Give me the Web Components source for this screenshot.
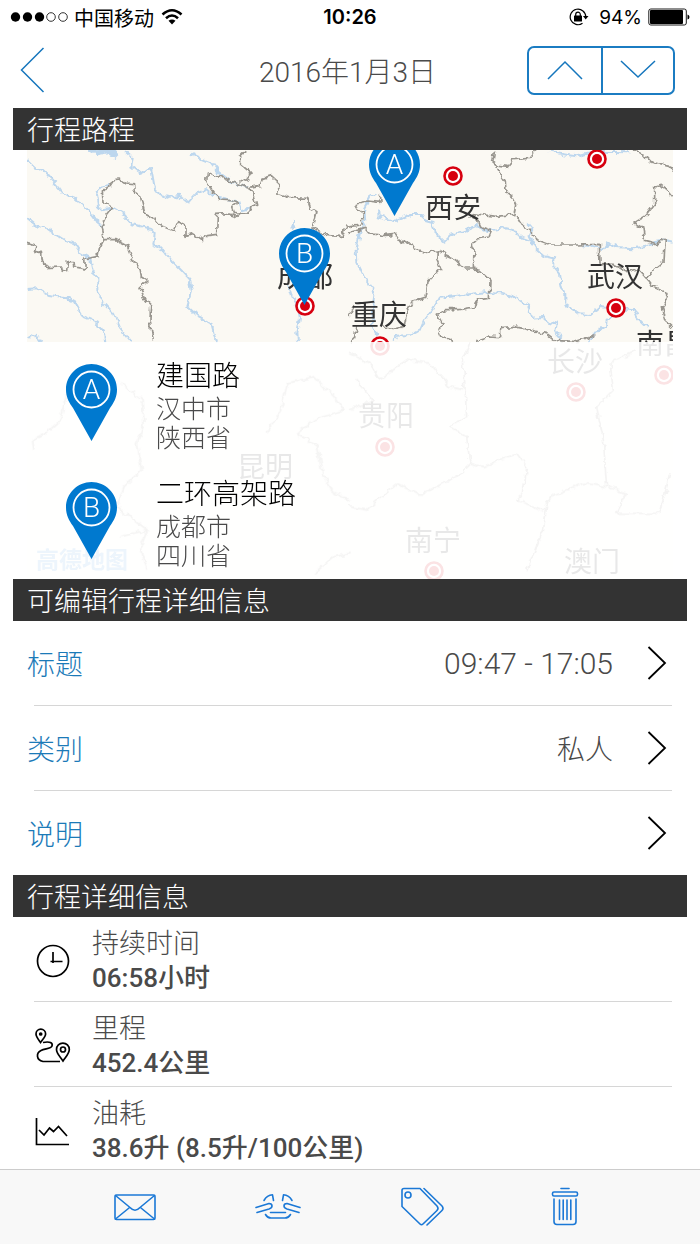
<!DOCTYPE html>
<html lang="zh-CN">
<head>
<meta charset="utf-8">
<meta name="viewport" content="width=device-width, initial-scale=1">
<title>2016年1月3日</title>
<style>
  body {
    margin: 0;
    background-color: #ffffff;
    font-family: Roboto, "Noto Sans CJK SC", sans-serif;
    font-weight: 300;
    color: #4a4a4a;
  }
</style>
</head>
<body>
<trip-page>
  <status-bar slot="status" carrier="中国移动" time="10:26" battery="94%"></status-bar>
  <nav-bar slot="nav">2016年1月3日</nav-bar>

  <trip-section heading="行程路程">
    <route-map>
      <route-stop letter="A" name="建国路" city="汉中市" province="陕西省"></route-stop>
      <route-stop letter="B" name="二环高架路" city="成都市" province="四川省"></route-stop>
    </route-map>
  </trip-section>

  <trip-section heading="可编辑行程详细信息">
    <edit-row label="标题" numeric>09:47 - 17:05</edit-row>
    <edit-row label="类别">私人</edit-row>
    <edit-row label="说明"></edit-row>
  </trip-section>

  <trip-section heading="行程详细信息">
    <detail-row icon="clock" label="持续时间">06:58小时</detail-row>
    <detail-row icon="route" label="里程">452.4公里</detail-row>
    <detail-row icon="chart" label="油耗">38.6升 (8.5升/100公里)</detail-row>
  </trip-section>

  <tool-bar slot="tools"></tool-bar>
</trip-page>

<script>
const pinShape = `
  <path fill="#0079cf" d="M25.5 0C11.5 0 0 11.300 0 25.500C0 33 3 38.500 7 44L25.500 77L44 44C48 38.500 51 33 51 25.500C51 11.300 39.500 0 25.500 0Z"/>
  <circle cx="25.500" cy="25.500" r="18" fill="none" stroke="#ffffff" stroke-width="1.800"/>
`;

const detailIcons = {
  clock: `
    <circle cx="18" cy="18" r="15.500"/>
    <path d="M18 9v11M15.500 18.500h12"/>`,
  route: `
    <path d="M5.500 14.500C3 11 1 8.500 1 6a4.800 4.800 0 0 1 9.600 0C10.600 8.500 8 11 5.500 14.500Z"/>
    <circle cx="5.700" cy="6" r="1" fill="#000000"/>
    <path d="M28 33C25 28.500 21.500 25.500 21.500 21.500a6.400 6.400 0 0 1 12.800 0C34.300 25.500 31 28.500 28 33Z"/>
    <circle cx="28" cy="21.500" r="2.500"/>
    <path d="M8 14.500C15 13 18 15 17 18C16 21 10 20.500 6 22.500C1 25 1 32 8 33.500H25"/>`,
  chart: `
    <path d="M1.500 5v26.500H34M4 17l5 5l5.500-7l4 3.500l5-5l8.500 9.500"/>`
};

class TripPage extends HTMLElement {
  constructor() {
    super();
    this.root = this.attachShadow({ mode: 'open' });
    this.root.innerHTML = `
      <style>
        :host {
          display: flex;
          flex-direction: column;
          min-height: 100vh;
        }

        main {
          flex: 1;
          padding: 0 13px;
        }
      </style>
      <slot name="status"></slot>
      <slot name="nav"></slot>
      <main><slot></slot></main>
      <slot name="tools"></slot>
    `;
  }
}

class StatusBar extends HTMLElement {
  constructor() {
    super();
    this.root = this.attachShadow({ mode: 'open' });
  }

  connectedCallback() {
    this.root.innerHTML = `
      <style>
        :host {
          display: grid;
          grid-template-columns: 1fr auto 1fr;
          align-items: center;
          height: 34px;
          padding: 0 10px;
          color: #000000;
          font-family: Inter, "Noto Sans CJK SC", sans-serif;
          font-size: 20px;
          font-weight: 400;
        }

        .side {
          display: flex;
          align-items: center;
          gap: 6px;
        }

        .right {
          justify-content: flex-end;
        }

        .time {
          font-weight: 600;
        }

        .battery {
          margin-left: 4px;
          font-size: 19px;
        }
      </style>
      <div class="side">
        <svg width="58" height="12" viewBox="0 0 58 12" aria-hidden="true">
          <circle cx="5.500" cy="6" r="4.700"/>
          <circle cx="17.500" cy="6" r="4.700"/>
          <circle cx="29.500" cy="6" r="4.700"/>
          <g fill="none" stroke="#000000" stroke-width=".8">
            <circle cx="41" cy="6" r="4.300"/>
            <circle cx="53" cy="6" r="4.300"/>
          </g>
        </svg>
        <span>${this.getAttribute('carrier')}</span>
        <svg width="24" height="18" viewBox="0 0 24 18" aria-hidden="true">
          <g fill="none" stroke="#000000" stroke-width="2.600">
            <path d="M2.500 6.500Q12 -2 21.500 6.500"/>
            <path d="M6 10.200Q12 4.800 18 10.200"/>
          </g>
          <path d="M8.500 12.800Q12 10 15.500 12.800L12 16.500Z"/>
        </svg>
      </div>
      <div class="time">${this.getAttribute('time')}</div>
      <div class="side right">
        <svg width="20" height="18" viewBox="0 0 20 18" aria-hidden="true">
          <g fill="none" stroke="#000000" stroke-width="1.200">
            <path d="M13.500 15.300A7.800 7.800 0 1 1 16.800 9"/>
            <path d="M6.700 8V6.500a2.300 2.300 0 0 1 4.600 0V8"/>
          </g>
          <rect x="5" y="7.500" width="8" height="6" rx=".5"/>
          <path d="M14 8h5.500l-2.800 3.500Z"/>
        </svg>
        <span class="battery">${this.getAttribute('battery')}</span>
        <svg width="42" height="18" viewBox="0 0 42 18" aria-hidden="true">
          <rect x=".8" y="1" width="37.500" height="16" rx="2" fill="none" stroke="#000000" stroke-width=".9"/>
          <rect x="2" y="2" width="33" height="14" rx="1"/>
          <path d="M39.500 6.500q2 .5 2 2.500t-2 2.500Z"/>
        </svg>
      </div>
    `;
  }
}

class NavBar extends HTMLElement {
  constructor() {
    super();
    this.root = this.attachShadow({ mode: 'open' });
    this.root.innerHTML = `
      <style>
        :host {
          display: grid;
          grid-template-columns: 1fr auto 1fr;
          align-items: center;
          height: 72px;
          padding: 0 25px 2px 20px;
        }

        h1 {
          margin: 0;
          font-size: 28px;
          font-weight: 300;
        }

        button {
          display: flex;
          align-items: center;
          justify-content: center;
          padding: 0;
          border: 0;
          background: none;
          cursor: pointer;
        }

        svg {
          fill: none;
          stroke: #1576bd;
          stroke-width: 1.5;
        }

        .back {
          justify-self: start;
        }

        .stepper {
          display: flex;
          justify-self: end;
          border: 2px solid #1b7cc2;
          border-radius: 7px;
        }

        .stepper button {
          width: 72px;
          height: 45px;
        }

        .stepper button + button {
          border-left: 2px solid #1b7cc2;
        }
      </style>
      <button type="button" class="back" aria-label="返回">
        <svg width="26" height="46" viewBox="0 0 26 46"><path d="M23.500 1L1.500 23L23.500 45"/></svg>
      </button>
      <h1><slot></slot></h1>
      <div class="stepper">
        <button type="button" aria-label="上一个">
          <svg width="36" height="20" viewBox="0 0 36 20"><path d="M1 19L18 2L35 19"/></svg>
        </button>
        <button type="button" aria-label="下一个">
          <svg width="36" height="20" viewBox="0 0 36 20"><path d="M1 1L18 17L35 1"/></svg>
        </button>
      </div>
    `;
  }
}

class TripSection extends HTMLElement {
  constructor() {
    super();
    this.root = this.attachShadow({ mode: 'open' });
  }

  connectedCallback() {
    this.root.innerHTML = `
      <style>
        :host {
          display: block;
        }

        h2 {
          margin: 0;
          padding: 4px 14px 0;
          background-color: #333333;
          color: #ffffff;
          font-size: 27px;
          font-weight: 300;
          line-height: 38px;
        }
      </style>
      <h2>${this.getAttribute('heading')}</h2>
      <slot></slot>
    `;
  }
}

class RouteMap extends HTMLElement {
  constructor() {
    super();
    this.root = this.attachShadow({ mode: 'open' });
    this.renderHTML();
  }

  renderCity(x, y, name) {
    return `<text x="${x}" y="${y}">${name}</text>`;
  }

  renderTarget(x, y) {
    return `
      <circle cx="${x}" cy="${y}" r="8.500" fill="#ffffff" stroke="#d7000f" stroke-width="2.600"/>
      <circle cx="${x}" cy="${y}" r="5" fill="#d7000f"/>`;
  }

  renderPin(x, y, letter) {
    return `
      <g transform="translate(${x} ${y})">
        ${pinShape}
        <text class="letter" x="25.500" y="35">${letter}</text>
      </g>`;
  }

  renderHTML() {
    const cities = [
      [426, 68, '西安'], [352, 175, '重庆'], [588, 137, '武汉'], [278, 137, '成都'],
      [637, 204, '南昌'], [548, 222, '长沙'], [359, 276, '贵阳'], [238, 327, '昆明'],
      [406, 401, '南宁'], [565, 422, '澳门']
    ];
    const targets = [
      [426, 26], [570, 9], [589, 158], [278, 156], [353, 196],
      [549, 242], [637, 225], [358, 297], [407, 421]
    ];

    this.root.innerHTML = `
      <style>
        :host {
          display: block;
          position: relative;
          margin: 0 14px;
          padding-top: 192px;
          overflow: hidden;
          background-color: #fbf9f3;
        }

        .map {
          position: absolute;
          top: 0;
          left: 0;
          width: 100%;
          height: 100%;
        }

        .map text {
          fill: #333333;
          font-size: 28px;
          font-weight: 400;
          text-anchor: middle;
        }

        .map .letter {
          fill: #ffffff;
          font-weight: 300;
        }

        .map .brand {
          fill: #5aa0e0;
          font-size: 23px;
          font-weight: 700;
        }

        .lines {
          fill: none;
          stroke-linejoin: round;
        }

        .river {
          stroke: #bdd7ee;
          stroke-width: 6;
        }

        .border {
          stroke: #98958e;
          stroke-width: 5;
        }

        .stops {
          position: relative;
          padding-bottom: 1px;
          background-color: rgba(255, 255, 255, 0.89);
        }
      </style>
      <svg class="map" viewBox="0 0 646 429" preserveAspectRatio="xMidYMin slice" role="img" aria-label="地图">
        <defs>
          <filter id="rough" x="-5%" y="-5%" width="110%" height="110%" color-interpolation-filters="sRGB">
            <feTurbulence type="fractalNoise" baseFrequency=".15" numOctaves="2" seed="4"/>
            <feDisplacementMap in="SourceGraphic" scale="7" xChannelSelector="R" yChannelSelector="G"/>
          </filter>
        </defs>
        <g class="lines" filter="url(#rough)"><g transform="scale(.33333)">
          <!-- west half -->
          <g transform="translate(-39 -15)">
            <g class="river">
              <path d="M38 46L62 68L90 78L128 120L150 146L182 158L210 182L226 200L250 232L268 246"/>
              <path d="M38 218L62 238L100 250L128 270L156 288L180 294L200 324L228 340L236 376L250 400L250 436L270 474L300 506L318 548L352 590"/>
              <path d="M38 432L70 430L104 450L150 456L180 470L204 512L246 530L270 560L274 590M40 580L66 566L82 590"/>
              <path d="M286 120L256 126L246 148L252 184L264 196L300 190L330 208L356 238L412 252L422 264L418 300L446 314L476 350L504 378L528 404L534 440L520 484L550 512L592 534L606 590"/>
              <path fill="#bdd7ee" d="M228 16L248 28L280 22L300 36L312 24L300 14Z"/>
              <path d="M336 22L356 40L352 62L380 84L412 72L422 128L440 150L470 158L496 152L520 172L544 146L576 132L600 152L642 162L676 170L684 196L712 190M530 26L560 40L590 52L612 80L652 110L700 128"/>
              <path d="M842 228L834 254M822 420L832 452L850 480L858 520L850 560L852 590"/>
            </g>
            <g class="border">
              <path d="M38 292L70 302L64 318L82 322L86 350L98 368L140 366L158 380L160 350L180 350L182 366L214 372L212 342L252 334L256 310L270 284L304 284L340 304L356 346L378 374L382 396L402 408L378 430L396 466L410 480L408 520L418 590"/>
              <path d="M270 284L268 262L264 240L276 214L296 188L270 170L268 138L286 126L300 104L318 102L334 114L358 116L362 144L380 158L392 206L420 222L436 240L480 258L494 230L516 246L516 274L540 266L564 284L580 272L608 268L610 208L640 206L668 214L680 204L704 208L712 188L728 180L722 156L704 130L660 112L620 94L580 84L578 108L592 134L616 162L654 164L672 172L652 186L658 202L680 206"/>
              <path d="M694 16L680 30L680 58L704 78L708 92L676 112M704 128L738 122L746 100L772 92L790 108L792 146L828 158L880 160L890 190L906 200L894 250L942 272L984 274L996 244L1020 240"/>
            </g>
          </g>
          <!-- east half -->
          <g transform="translate(969 -15)">
            <g class="river">
              <path d="M84 190L86 214L134 228L178 210L216 210L226 228L248 234L254 262L284 290L302 272L346 256L380 240L412 256L466 250L500 258L510 276L548 290L560 312L584 334L610 340L610 362L630 386L634 420L646 446L646 478L688 508L722 510L750 486L776 490M798 490L850 492L862 518L894 550"/>
              <path d="M76 146L60 156L42 190L46 226L30 262L20 310L22 356L46 404L74 440L70 480L66 540L80 570"/>
              <path d="M130 590L140 572L180 570L212 552L222 528L254 484L268 458L320 452L370 446L420 440L460 446L494 456L534 482L546 518L580 516L596 530L620 536L616 562L640 590M798 510L770 524L768 544L740 560L716 590"/>
              <path d="M600 20L640 28L680 34L740 20L840 22M550 300L536 272L548 250L532 232M700 300L760 312L772 292L800 306L850 310L890 302L912 292L950 286L968 290"/>
            </g>
            <g class="border">
              <path d="M0 244L36 240L40 208L16 192L24 174L52 168L90 172L88 146M0 262L44 250L56 264L86 266L100 272L136 268L154 296L180 290L194 312L228 322L264 318L290 332L316 344L344 372L370 372L372 312L366 296L380 282L416 276L424 256L392 244L386 230L360 216L370 206L440 214L494 208L500 180L490 160L468 140L466 108L444 76L440 60L428 50L434 16"/>
              <path d="M440 60L472 64L488 44L538 40L558 16M498 208L516 240L548 264L558 284L600 300L680 300L748 298L750 356M262 318L260 344L272 372L234 410L228 456L186 470L170 500L164 540L130 550L100 546M370 372L388 376L420 406L418 460L378 466L372 486L328 494L286 494L262 508L276 534L264 556L272 574L310 590M380 586L412 576L452 578L452 548L490 544L546 556L590 566L616 586L680 590L740 570"/>
              <path d="M846 16L880 28L900 50L960 64L970 80M968 154L950 132L934 118L914 124L914 176L886 214L852 234L878 248L884 286L920 296L946 284L942 350L914 372L890 402L908 426L944 440L954 458L934 488L944 524L968 546M750 356L790 358L830 380L860 372L890 404"/>
              <path d="M0 590L14 576L18 546M0 510L14 480"/>
            </g>
          </g>
          <!-- south, seen through the stop list -->
          <g transform="translate(-39 570)" class="border">
            <path d="M60 330L56 300L96 280L140 240L160 150L220 120M320 130L384 180L390 250L370 310L382 390L330 440L310 500L400 570L380 620L400 690M320 590L400 570M760 280L800 210L820 130L900 110L960 170L990 210L900 240L850 280L910 320L924 400L960 460L1010 480M900 700L960 650L1010 640"/>
          </g>
          <g transform="translate(969 570)" class="border">
            <path d="M0 500L50 510L140 430L210 465L320 410L360 370L350 290L300 260L350 230L340 60L360 10M360 370L400 380L500 340L530 380L520 460L500 480L580 510L600 470L700 430L770 440L760 300L740 200L790 150L780 70L860 30M770 440L830 460L800 520L930 520L960 400M590 500L580 570L530 690M0 40L60 70L90 120L170 60L240 70L300 140L340 150M0 210L70 180L20 120"/>
          </g>
        </g></g>
        ${targets.map(([x, y]) => this.renderTarget(x, y)).join('')}
        ${cities.map(([x, y, name]) => this.renderCity(x, y, name)).join('')}
        <text class="brand" x="55" y="418">高德地图</text>
        ${this.renderPin(342, -11, 'A')}
        ${this.renderPin(252, 78, 'B')}
      </svg>
      <div class="stops"><slot></slot></div>
    `;
  }
}

class RouteStop extends HTMLElement {
  constructor() {
    super();
    this.root = this.attachShadow({ mode: 'open' });
  }

  connectedCallback() {
    this.root.innerHTML = `
      <style>
        :host {
          display: flex;
          align-items: flex-start;
          gap: 39px;
          box-sizing: border-box;
          min-height: 118px;
          padding: 17px 0 7px 39px;
        }

        svg {
          flex: none;
          margin-top: 5px;
        }

        text {
          fill: #ffffff;
          font-size: 28px;
          text-anchor: middle;
        }

        .name {
          color: #000000;
          font-size: 28px;
          line-height: 36px;
        }

        .place {
          font-size: 25px;
          line-height: 29px;
        }
      </style>
      <svg width="51" height="77" viewBox="0 0 51 77">
        ${pinShape}
        <text x="25.500" y="35">${this.getAttribute('letter')}</text>
      </svg>
      <div>
        <div class="name">${this.getAttribute('name')}</div>
        <div class="place">${this.getAttribute('city')}</div>
        <div class="place">${this.getAttribute('province')}</div>
      </div>
    `;
  }
}

class EditRow extends HTMLElement {
  constructor() {
    super();
    this.root = this.attachShadow({ mode: 'open' });
  }

  connectedCallback() {
    this.root.innerHTML = `
      <style>
        :host {
          display: block;
          font-size: 28px;
        }

        button {
          display: flex;
          align-items: center;
          width: 100%;
          height: 84px;
          padding: 0 20px 0 14px;
          border: 0;
          background: none;
          color: inherit;
          font: inherit;
          text-align: left;
          cursor: pointer;
        }

        .label {
          flex: 1;
          color: #1b7ab8;
        }

        :host([numeric]) .value {
          font-size: 30px;
        }

        svg {
          margin-left: 34px;
          fill: none;
          stroke: #000000;
          stroke-width: 1.8;
        }

        .rule {
          height: 1px;
          margin: 0 15px 0 21px;
          background-color: #d6d6d6;
        }

        :host(:last-of-type) .rule {
          display: none;
        }
      </style>
      <button type="button">
        <span class="label">${this.getAttribute('label')}</span>
        <span class="value"><slot></slot></span>
        <svg width="20" height="34" viewBox="0 0 20 34" aria-hidden="true"><path d="M1.500 1L18 17L1.500 33"/></svg>
      </button>
      <div class="rule"></div>
    `;
  }
}

class DetailRow extends HTMLElement {
  constructor() {
    super();
    this.root = this.attachShadow({ mode: 'open' });
  }

  connectedCallback() {
    this.root.innerHTML = `
      <style>
        :host {
          display: flex;
          align-items: center;
          gap: 21px;
          margin: 0 15px 0 21px;
          padding: 10px 0 6px 1px;
          border-bottom: 1px solid #d6d6d6;
          line-height: 34px;
        }

        :host(:last-of-type) {
          padding-bottom: 4px;
          border-bottom: 0;
        }

        svg {
          fill: none;
          stroke: #000000;
          stroke-width: 1.7;
        }

        .label {
          font-size: 27px;
        }

        .value {
          font-size: 26px;
          font-weight: 500;
        }
      </style>
      <svg width="36" height="36" viewBox="0 0 36 36" aria-hidden="true">${detailIcons[this.getAttribute('icon')]}</svg>
      <div>
        <div class="label">${this.getAttribute('label')}</div>
        <div class="value"><slot></slot></div>
      </div>
    `;
  }
}

class ToolBar extends HTMLElement {
  constructor() {
    super();
    this.root = this.attachShadow({ mode: 'open' });
    this.root.innerHTML = `
      <style>
        :host {
          display: flex;
          align-items: center;
          justify-content: space-around;
          box-sizing: border-box;
          height: 75px;
          padding: 0 9%;
          border-top: 1px solid #cccccc;
          background-color: #f8f8f8;
        }

        button {
          display: flex;
          padding: 0;
          border: 0;
          background: none;
          cursor: pointer;
        }

        svg {
          fill: none;
          stroke: #1b78d6;
          stroke-width: 1.6;
          stroke-linecap: round;
          stroke-linejoin: round;
        }
      </style>
      <button type="button" aria-label="邮件">
        <svg width="46" height="44" viewBox="0 0 46 44">
          <rect x="3" y="10" width="40" height="24.500" rx="1.500"/>
          <path d="M3.500 10.500L18 22.500Q23 28 28 22.500L42.500 10.500M3.500 34L17 23M42.500 34L29 23"/>
        </svg>
      </button>
      <button type="button" aria-label="合并">
        <svg width="46" height="44" viewBox="0 0 46 44">
          <path d="M9 15.500Q12 10 17.500 9.800L18.500 15.500M37 15.500Q34 10 28.500 9.800L27.500 15.500"/>
          <path d="M1 22.500L14 18.500Q17 18.500 17 21Q17 23 14 24L2 27.500M45 22.500L32 18.500Q29 18.500 29 21Q29 23 32 24L44 27.500"/>
          <path d="M15.500 27.500H30.500M10.500 29.500Q12.500 33 16 33H30Q33.500 33 35.500 29.500"/>
        </svg>
      </button>
      <button type="button" aria-label="标签">
        <svg width="46" height="44" viewBox="0 0 46 44">
          <path d="M5 3.500H21L38 21Q40 23.500 38 25.500L24 39Q22.500 40.500 21 39L3 21.500V5.500Q3 3.500 5 3.500Z"/>
          <circle cx="9" cy="10" r="3"/>
          <path d="M25 3.500L43 21Q45 23.500 43 25.500L28 40"/>
        </svg>
      </button>
      <button type="button" aria-label="删除">
        <svg width="46" height="44" viewBox="0 0 46 44">
          <path d="M19 3.500H27"/>
          <rect x="10.500" y="7" width="25" height="4" rx="1.500"/>
          <path d="M12 14V36.500Q12 39.500 15 39.500H31Q34 39.500 34 36.500V14M17.500 15V34.500M21.200 15V34.500M25 15V34.500M28.800 15V34.500"/>
        </svg>
      </button>
    `;
  }
}

customElements.define('trip-page', TripPage);
customElements.define('status-bar', StatusBar);
customElements.define('nav-bar', NavBar);
customElements.define('trip-section', TripSection);
customElements.define('route-map', RouteMap);
customElements.define('route-stop', RouteStop);
customElements.define('edit-row', EditRow);
customElements.define('detail-row', DetailRow);
customElements.define('tool-bar', ToolBar);
</script>
</body>
</html>
